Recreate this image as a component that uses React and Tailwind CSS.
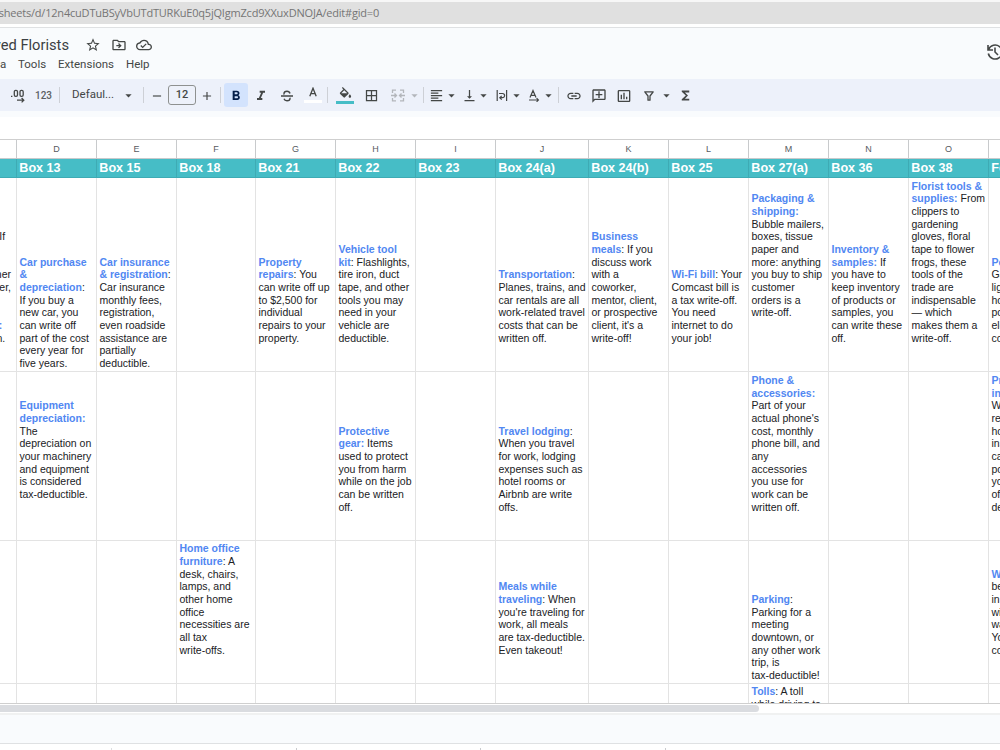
import React from "react";
import {
  MdStarBorder, MdOutlineDriveFileMove, MdOutlineCloudDone, MdFormatBold, MdFormatItalic,
  MdBorderAll, MdFormatAlignLeft, MdVerticalAlignBottom, MdLink, MdOutlineAddComment,
  MdInsertChartOutlined, MdFunctions, MdArrowDropDown,
  MdRemove, MdAdd, MdFormatColorFill,
} from "react-icons/md";

const columns = [
  { id: "C", w: "w-[17px]", head: "" },
  { id: "D", w: "w-[80px]", head: "Box 13" },
  { id: "E", w: "w-[80px]", head: "Box 15" },
  { id: "F", w: "w-[79px]", head: "Box 18" },
  { id: "G", w: "w-[80px]", head: "Box 21" },
  { id: "H", w: "w-[80px]", head: "Box 22" },
  { id: "I", w: "w-[80px]", head: "Box 23" },
  { id: "J", w: "w-[93px]", head: "Box 24(a)" },
  { id: "K", w: "w-[80px]", head: "Box 24(b)" },
  { id: "L", w: "w-[80px]", head: "Box 25" },
  { id: "M", w: "w-[80px]", head: "Box 27(a)" },
  { id: "N", w: "w-[80px]", head: "Box 36" },
  { id: "O", w: "w-[80px]", head: "Box 38" },
  { id: "P", w: "w-[80px]", head: "Fees" },
];

// Text between asterisks is drawn as a bold blue label.
const rows = [
  {
    h: "h-[194px]",
    cells: {
      C: ["If  ", "", "", "ner", "er,", "", "", "*t:*   ", "n.  ", "", ""],
      D: ["*Car purchase*", "*&*", "*depreciation*:", "If you buy a", "new car, you", "can write off", "part of the cost", "every year for", "five years."],
      E: ["*Car insurance*", "*& registration*:", "Car insurance", "monthly fees,", "registration,", "even roadside", "assistance are", "partially", "deductible."],
      G: ["*Property*", "*repairs*: You", "can write off up", "to $2,500 for", "individual", "repairs to your", "property.", "", ""],
      H: ["*Vehicle tool*", "*kit*: Flashlights,", "tire iron, duct", "tape, and other", "tools you may", "need in your", "vehicle are", "deductible.", "", ""],
      J: ["*Transportation*:", "Planes, trains, and", "car rentals are all", "work-related travel", "costs that can be", "written off.", "", ""],
      K: ["*Business*", "*meals*: If you", "discuss work", "with a", "coworker,", "mentor, client,", "or prospective", "client, it's a", "write-off!", "", ""],
      L: ["*Wi-Fi bill*: Your", "Comcast bill is", "a tax write-off.", "You need", "internet to do", "your job!", "", ""],
      M: ["*Packaging &*", "*shipping:*", "Bubble mailers,", "boxes, tissue", "paper and", "more: anything", "you buy to ship", "customer", "orders is a", "write-off.", "", "", "", ""],
      N: ["*Inventory &*", "*samples:* If", "you have to", "keep inventory", "of products or", "samples, you", "can write these", "off.", "", ""],
      O: ["*Florist tools &*", "*supplies:* From", "clippers to", "gardening", "gloves, floral", "tape to flower", "frogs, these", "tools of the", "trade are", "indispensable", "— which", "makes them a", "write-off.", "", ""],
      P: ["*Power:*", "Gas,", "light,", "hot", "power", "elec", "cost", "", ""],
    },
  },
  {
    h: "h-[169px]",
    cells: {
      D: ["*Equipment*", "*depreciation:*", "The", "depreciation on", "your machinery", "and equipment", "is considered", "tax-deductible.", "", "", ""],
      H: ["*Protective*", "*gear:* Items", "used to protect", "you from harm", "while on the job", "can be written", "off.", "", ""],
      J: ["*Travel lodging*:", "When you travel", "for work, lodging", "expenses such as", "hotel rooms or", "Airbnb are write", "offs.", "", ""],
      M: ["*Phone &*", "*accessories:*", "Part of your", "actual phone's", "cost, monthly", "phone bill, and", "any", "accessories", "you use for", "work can be", "written off.", "", ""],
      P: ["*Prof*", "*insur*", "Whe", "rent", "home", "insur", "can", "port", "your", "off", "dedu", "", ""],
    },
  },
  {
    h: "h-[143px]",
    cells: {
      F: ["*Home office*", "*furniture*: A", "desk, chairs,", "lamps, and", "other home", "office", "necessities are", "all tax", "write-offs.", "", ""],
      J: ["*Meals while*", "*traveling*: When", "you're traveling for", "work, all meals", "are tax-deductible.", "Even takeout!", "", ""],
      M: ["*Parking*:", "Parking for a", "meeting", "downtown, or", "any other work", "trip, is", "tax-deductible!"],
      P: ["*Web*", "be", "in", "with", "was", "You", "cost", "", ""],
    },
  },
];

function Line({ text }) {
  return (
    <div className="h-[12.66px] whitespace-pre leading-[12.66px]">
      {text.split("*").map((part, i) =>
        i % 2 ? <b key={i} className="font-bold text-[#5187f2]">{part}</b> : <span key={i}>{part}</span>
      )}
    </div>
  );
}

function Row({ h, cells }) {
  return (
    <div className={`flex shrink-0 ${h}`}>
      {columns.map((c) => (
        <div
          key={c.id}
          className={`flex shrink-0 flex-col justify-end overflow-hidden border-r border-b border-[#e3e3e3] pb-[1.4px] ${c.w} ${c.id === "C" ? "items-end pr-[5px]" : "pl-[2.5px]"}`}
        >
          {(cells[c.id] || []).map((t, i) => <Line key={i} text={t} />)}
        </div>
      ))}
    </div>
  );
}

function Slot({ className, children }) {
  return <div className={`flex shrink-0 items-center justify-center [&>svg]:mt-px [&>svg]:shrink-0 ${className}`}>{children}</div>;
}

function Divider({ className }) {
  return <Slot className={className}><div className="h-4 w-px bg-[#cdd0d6]" /></Slot>;
}

function Arrow({ className }) {
  return <Slot className={className}><MdArrowDropDown size={15} /></Slot>;
}

function Toolbar() {
  return (
    <div className="flex h-8 shrink-0 items-center bg-[#edf1fa] pl-1 text-[#444746]">
      <Slot className="w-[26px] pl-[2px]">
        <svg width="16" height="16" viewBox="0 0 16 16" fill="none" stroke="currentColor" strokeWidth="1.3">
          <path d="M1 8.3h1.4" />
          <rect x="4.3" y="2.3" width="3.2" height="6" rx="1.4" />
          <rect x="10" y="2.3" width="3.2" height="6" rx="1.4" />
          <path d="M7 12.2h6.500M11.600 10l2.200 2.200-2.200 2.200" />
        </svg>
      </Slot>
      <Slot className="w-[27px] text-[10px] font-medium text-[#5c5f62]">123</Slot>
      <Divider className="w-[5px]" />
      <div className="w-[58px] shrink-0 pl-[10px] text-[11.500px]">Defaul...</div>
      <Arrow className="w-4" />
      <Divider className="w-[14px]" />
      <Slot className="w-[13px]"><MdRemove size={14} /></Slot>
      <Slot className="ml-[5px] h-5 w-[28px] rounded-[3px] border border-[#8e9190] text-[11px] font-medium">12</Slot>
      <Slot className="w-[22px]"><MdAdd size={14} /></Slot>
      <Divider className="w-1" />
      <Slot className="ml-[2px] h-6 w-6 rounded-[3px] bg-[#d3e3fd] pr-px text-[#041e49]"><MdFormatBold size={16} /></Slot>
      <Slot className="w-[26px]"><MdFormatItalic size={16} /></Slot>
      <Slot className="w-[25px]">
        <svg width="16" height="16" viewBox="0 0 16 16" fill="none" stroke="currentColor" strokeWidth="1.4">
          <path d="M2 8h12M11 5.500C10.600 4 9.500 3.300 8 3.300c-1.800 0-3 .9-3 2.200 0 .4.100.700.300 1M5 10.700c.4 1.300 1.500 2 3 2 1.800 0 3-.9 3-2.200 0-.3 0-.5-.1-.7" />
        </svg>
      </Slot>
      <Slot className="w-[27px]">
        <div className="flex flex-col items-center">
          <svg width="12" height="10" viewBox="0 0 12 10" fill="none" stroke="currentColor" strokeWidth="1.3">
            <path d="M2.800 9.200 6 1.200 9.200 9.200M3.900 6.700h4.200" />
          </svg>
          <div className="mt-[3px] h-[3px] w-[18px] bg-white" />
        </div>
      </Slot>
      <Divider className="w-[3px]" />
      <Slot className="w-[31px]">
        <div className="flex h-[17px] flex-col items-center justify-between overflow-hidden pl-px">
          <div className="h-[12px] overflow-hidden"><MdFormatColorFill size={15} /></div>
          <div className="h-[3px] w-[18px] shrink-0 bg-[#46bdc6]" />
        </div>
      </Slot>
      <Slot className="w-[22px] pl-px"><MdBorderAll size={15} /></Slot>
      <Slot className="ml-[5px] w-[21px] text-[#b3b6bb]">
        <svg width="14" height="13" viewBox="0 0 14 13" fill="none" stroke="currentColor" strokeWidth="1.3">
          <path d="M5 1.200H1.500V4M9 1.200h3.500V4M5 11.800H1.500V9M9 11.800h3.500V9M0 6.500h5M3.500 4.500l2 2-2 2M14 6.500H9M10.500 4.500l-2 2 2 2" />
        </svg>
      </Slot>
      <Slot className="w-[13px] text-[#b3b6bb]"><MdArrowDropDown size={15} /></Slot>
      <Divider className="w-1" />
      <Slot className="ml-[2px] w-[19px]"><MdFormatAlignLeft size={15} /></Slot>
      <Arrow className="w-[10px]" />
      <Slot className="ml-[3px] w-5"><MdVerticalAlignBottom size={15} /></Slot>
      <Arrow className="w-[9px]" />
      <Slot className="ml-[3px] w-[21px]">
        <svg width="12" height="13" viewBox="0 0 12 13" fill="none" stroke="currentColor" strokeWidth="1.2">
          <path d="M1.200 1v11M10.600 1v11M3 4.500h3.500a2 2 0 0 1 0 4.200H4M5.700 6.800 3.800 8.700l1.900 1.900" />
        </svg>
      </Slot>
      <Arrow className="w-2" />
      <Slot className="ml-[4px] w-5">
        <svg width="12" height="13" viewBox="0 0 12 13" fill="none" stroke="currentColor" strokeWidth="1.2">
          <path d="M2 8.500 5 1.500 8 8.500M3 6.300h4M1 11h9M8.600 9.200l1.800 1.800-1.800 1.800" />
        </svg>
      </Slot>
      <Arrow className="w-2" />
      <Divider className="w-3" />
      <Slot className="w-[19px]"><MdLink size={16} /></Slot>
      <Slot className="w-8"><MdOutlineAddComment size={16} className="-scale-x-100" /></Slot>
      <Slot className="w-[18px]"><MdInsertChartOutlined size={16} /></Slot>
      <Slot className="ml-[6px] w-5">
        <svg width="12" height="12" viewBox="0 0 12 12" fill="none" stroke="currentColor" strokeWidth="1.3" strokeLinejoin="round">
          <path d="M1.800 1.800h8.400L7 6v4.200H5V6z" />
        </svg>
      </Slot>
      <Arrow className="w-[14px]" />
      <Slot className="w-6"><MdFunctions size={15} /></Slot>
    </div>
  );
}

export default function App() {
  return (
    <div className="flex h-[750px] w-[1000px] flex-col overflow-hidden bg-white font-['Roboto',sans-serif]">
      <div className="h-[2px] shrink-0 bg-[#f7f7f7]" />
      <div className="flex h-[22px] shrink-0 items-center bg-[#e0e0e0]">
        <div className="flex w-[379px] justify-end whitespace-nowrap font-['Open_Sans',sans-serif] text-[11px] tracking-[-0.200px] text-[#757575]">
          sheets/d/12n4cuDTuBSyVbUTdTURKuE0q5jQIgmZcd9XXuxDNOJA/edit#gid=0
        </div>
      </div>
      <div className="h-[4px] shrink-0 border-b border-[#dfe1e3]" />

      <div className="flex h-[51px] shrink-0 justify-between bg-[#f9fbfd] text-[#444746]">
        <div className="flex flex-col">
          <div className="mt-[7px] flex h-5 items-center">
            <div className="flex w-[69px] justify-end whitespace-nowrap text-[14.700px] text-[#3c4043]">ved Florists</div>
            <MdStarBorder size={16} className="ml-4" />
            <MdOutlineDriveFileMove size={16} className="ml-[10px]" />
            <MdOutlineCloudDone size={16} className="ml-[9px]" />
          </div>
          <div className="flex h-5 items-center text-[11.500px]">
            <div className="w-[5px]">a</div>
            <div className="ml-[13px] w-[40px]">Tools</div>
            <div className="w-[68px]">Extensions</div>
            <div>Help</div>
          </div>
        </div>
        <div className="w-[14px] overflow-hidden pt-[14px]">
          <svg width="20" height="20" viewBox="0 0 20 20" fill="none" stroke="currentColor" strokeWidth="1.6" className="max-w-none">
            <path d="M2 3v5h5M2.600 7.500A7 7 0 1 1 2.300 11.500M9 5.500V10l3 3" />
          </svg>
        </div>
      </div>
      <Toolbar />
      <div className="h-[6px] shrink-0 bg-[#f9fbfd]" />

      <div className="mt-[22px] flex h-[565px] shrink-0 flex-col overflow-hidden border-t border-b border-[#cfcfcf] font-['Liberation_Sans',Arial,sans-serif] text-[10.500px] text-[#202124]">
        <div className="flex h-[19px] shrink-0">
          {columns.map((c) => (
            <div key={c.id} className={`flex shrink-0 items-center justify-center border-r border-b border-[#c8cacc] pt-[2px] text-[9px] text-[#575b5f] ${c.w}`}>
              {c.id === "C" || c.id === "P" ? "" : c.id}
            </div>
          ))}
        </div>
        <div className="flex h-[19px] shrink-0">
          {columns.map((c) => (
            <div key={c.id} className={`flex shrink-0 items-center whitespace-nowrap border-r border-b border-[#3eabb4] bg-[#46bdc6] pl-[2.300px] pt-px text-[12.600px] font-bold text-white ${c.w}`}>
              {c.head}
            </div>
          ))}
        </div>
        {rows.map((r, i) => <Row key={i} {...r} />)}
        <div className="flex h-[40px] shrink-0">
          {columns.map((c) => (
            <div key={c.id} className={`shrink-0 border-r border-[#e3e3e3] pl-[2.500px] pt-[1.400px] ${c.w}`}>
              {c.id === "M" && <><Line text="*Tolls*: A toll" /><Line text="while driving to" /></>}
            </div>
          ))}
        </div>
      </div>

      <div className="flex h-[9px] shrink-0 items-center"><div className="h-[7px] w-[759px] rounded-r-full bg-[#dadce0]" /></div>
      <div className="h-[31px] shrink-0 border-t-2 border-b border-t-[#f0f1f1] border-b-[#dfe1e3] bg-[#f9fbfd]" />
      <div className="mt-[4px] flex h-[2px] shrink-0 pl-[111px]">
        <div className="mr-[184px] w-px bg-[#dcdee0]" />
        <div className="mr-[183px] w-px bg-[#c9cbce]" />
        <div className="mr-[184px] w-px bg-[#c9cbce]" />
        <div className="w-px bg-[#c9cbce]" />
      </div>
    </div>
  );
}
